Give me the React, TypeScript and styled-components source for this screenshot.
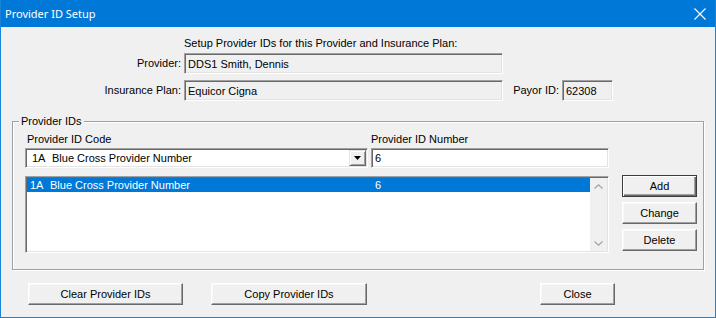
import React from 'react';
import styled, { createGlobalStyle, css } from 'styled-components';

const GlobalStyle = createGlobalStyle`
  html, body {
    margin: 0;
    padding: 0;
    background: #f0f0f0;
  }
  body {
    font-family: "Liberation Sans", Arial, sans-serif;
    font-size: 11px;
    color: #000;
  }
`;

const Window = styled.div`
  box-sizing: border-box;
  width: 716px;
  height: 318px;
  background: #f0f0f0;
  border: 1px solid #1883d7;
  border-top: none;
  display: flex;
  flex-direction: column;
`;

const TitleBar = styled.div`
  height: 27px;
  flex-shrink: 0;
  background: #0078d7;
  color: #fff;
  display: flex;
  align-items: center;
  justify-content: space-between;
  padding: 0 9px 0 4px;
  font-family: "Noto Sans", "Open Sans", sans-serif;
  font-size: 11px;
`;

const Heading = styled.div`
  margin: 10px 0 0 183px;
  height: 16px;
  line-height: 13px;
`;

const InfoGrid = styled.div`
  display: grid;
  grid-template-columns: 180px 319px 53px 51px;
  column-gap: 3px;
  row-gap: 6px;
  align-items: center;
`;

const Label = styled.span<{ $right?: boolean }>`
  text-align: ${(p) => (p.$right ? 'right' : 'left')};
  white-space: nowrap;
  line-height: 13px;
`;

const sunken = css`
  box-sizing: border-box;
  border: 1px solid;
  border-color: #a0a0a0 #fff #fff #a0a0a0;
  box-shadow: inset 1px 1px #696969, inset -1px -1px #e3e3e3;
`;

const Field = styled.div<{ $readonly?: boolean; $h?: number }>`
  ${sunken}
  height: ${(p) => p.$h ?? 21}px;
  background: ${(p) => (p.$readonly ? '#f0f0f0' : '#fff')};
  display: flex;
  align-items: center;
  padding: 0 3px;
  white-space: nowrap;
  overflow: hidden;
`;

const GroupBox = styled.div`
  position: relative;
  box-sizing: border-box;
  margin: 20px 0 0 11px;
  width: 692px;
  height: 149px;
  border: 1px solid #a0a0a0;
  box-shadow: inset 1px 1px #fff, 1px 1px #fff;
  padding: 11px 6px 0 12px;
`;

const Legend = styled.span`
  position: absolute;
  top: -7px;
  left: 6px;
  padding: 0 2px;
  background: #f0f0f0;
  line-height: 13px;
`;

const GroupGrid = styled.div`
  display: grid;
  grid-template-columns: 343px 239px 75px;
  grid-template-rows: 13px 20px 77px;
  column-gap: 2px;
  row-gap: 2px;
  grid-template-areas:
    'codeL numL .'
    'combo num .'
    'list list btns';
`;

const Area = styled.div<{ $area: string; $ml?: number }>`
  grid-area: ${(p) => p.$area};
  margin-left: ${(p) => p.$ml ?? 0}px;
  min-width: 0;
`;

const Combo = styled.div`
  ${sunken}
  height: 20px;
  background: #fff;
  display: flex;
  align-items: stretch;
  padding: 1px;
`;

const ComboText = styled.div`
  flex: 1;
  display: flex;
  align-items: center;
  padding-left: 5px;
  white-space: nowrap;
`;

const Code = styled.span`
  display: inline-block;
  width: 20px;
`;

const DropButton = styled.div`
  box-sizing: border-box;
  width: 17px;
  background: #f0f0f0;
  border: 1px solid;
  border-color: #e3e3e3 #696969 #696969 #e3e3e3;
  box-shadow: inset 1px 1px #fff, inset -1px -1px #a0a0a0;
  display: flex;
  align-items: center;
  justify-content: center;
`;

const ListBox = styled.div`
  ${sunken}
  height: 77px;
  margin-top: 6px;
  background: #fff;
  display: flex;
  padding: 1px;
`;

const ListRows = styled.div`
  flex: 1;
`;

const ListRow = styled.div<{ $selected?: boolean }>`
  display: grid;
  grid-template-columns: 20px 325px 1fr;
  height: 14px;
  line-height: 14px;
  padding-left: 3px;
  white-space: nowrap;
  background: ${(p) => (p.$selected ? '#0078d7' : 'transparent')};
  color: ${(p) => (p.$selected ? '#fff' : '#000')};
`;

const ScrollBar = styled.div`
  width: 17px;
  background: #f0f0f0;
  display: flex;
  flex-direction: column;
  justify-content: space-between;
  align-items: center;
  padding: 6px 0 5px;
  box-sizing: border-box;
`;

const SideButtons = styled.div`
  display: flex;
  flex-direction: column;
  gap: 5px;
  margin-top: 5px;
  margin-left: 11px;
`;

const Button = styled.button<{ $w: number; $default?: boolean }>`
  box-sizing: border-box;
  width: ${(p) => p.$w}px;
  height: 22px;
  padding: 0;
  background: #f0f0f0;
  color: #000;
  font-family: "Liberation Sans", Arial, sans-serif;
  font-size: 11px;
  border: 1px solid;
  border-color: #fff #696969 #696969 #fff;
  box-shadow: inset -1px -1px #a0a0a0, inset 1px 1px #f8f8f8;
  ${(p) =>
    p.$default &&
    css`
      border-color: #3c3c3c;
      box-shadow: inset 1px 1px #fff, inset -1px -1px #696969, inset -2px -2px #a0a0a0;
    `}
`;

const BottomRow = styled.div`
  display: flex;
  margin: 13px 0 0 27px;
  gap: 28px;
`;

const Spacer = styled.div<{ $w: number }>`
  width: ${(p) => p.$w}px;
`;

const CloseIcon = () => (
  <svg width="12" height="12" viewBox="0 0 12 12">
    <path d="M0.5 0.5 L11.5 11.5 M11.5 0.5 L0.5 11.5" stroke="#fff" strokeWidth="1.1" fill="none" />
  </svg>
);

const DownTriangle = () => (
  <svg width="7" height="4" viewBox="0 0 7 4">
    <path d="M0 0 H7 L3.5 4 Z" fill="#000" />
  </svg>
);

const Chevron = ({ up }: { up?: boolean }) => (
  <svg width="9" height="5" viewBox="0 0 9 5">
    <path
      d={up ? 'M0.5 4.5 L4.5 0.8 L8.5 4.5' : 'M0.5 0.5 L4.5 4.2 L8.5 0.5'}
      stroke="#a3a3a3"
      strokeWidth="1.2"
      fill="none"
    />
  </svg>
);

export default function App() {
  return (
    <>
      <GlobalStyle />
      <Window>
        <TitleBar>
          <span>Provider ID Setup</span>
          <CloseIcon />
        </TitleBar>

        <Heading>Setup Provider IDs for this Provider and Insurance Plan:</Heading>
        <InfoGrid>
          <Label $right>Provider:</Label>
          <Field $readonly>DDS1 Smith, Dennis</Field>
          <span />
          <span />
          <Label $right>Insurance Plan:</Label>
          <Field $readonly>Equicor Cigna</Field>
          <Label $right>Payor ID:</Label>
          <Field $readonly>62308</Field>
        </InfoGrid>

        <GroupBox>
          <Legend>Provider IDs</Legend>
          <GroupGrid>
            <Area $area="codeL" $ml={2}>
              <Label>Provider ID Code</Label>
            </Area>
            <Area $area="numL" $ml={1}>
              <Label>Provider ID Number</Label>
            </Area>
            <Area $area="combo">
              <Combo>
                <ComboText>
                  <Code>1A</Code>Blue Cross Provider Number
                </ComboText>
                <DropButton>
                  <DownTriangle />
                </DropButton>
              </Combo>
            </Area>
            <Area $area="num" $ml={1}>
              <Field $h={20}>6</Field>
            </Area>
            <Area $area="list">
              <ListBox>
                <ListRows>
                  <ListRow $selected>
                    <span>1A</span>
                    <span>Blue Cross Provider Number</span>
                    <span>6</span>
                  </ListRow>
                </ListRows>
                <ScrollBar>
                  <Chevron up />
                  <Chevron />
                </ScrollBar>
              </ListBox>
            </Area>
            <Area $area="btns">
              <SideButtons>
                <Button $w={75} $default>Add</Button>
                <Button $w={75}>Change</Button>
                <Button $w={75}>Delete</Button>
              </SideButtons>
            </Area>
          </GroupGrid>
        </GroupBox>

        <BottomRow>
          <Button $w={155}>Clear Provider IDs</Button>
          <Button $w={156}>Copy Provider IDs</Button>
          <Spacer $w={117} />
          <Button $w={75}>Close</Button>
        </BottomRow>
      </Window>
    </>
  );
}
